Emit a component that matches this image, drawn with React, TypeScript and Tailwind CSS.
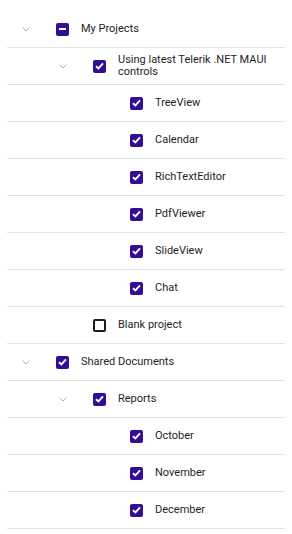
type Node = {
  label: string;
  level: number;
  state: "checked" | "unchecked" | "mixed";
  expandable?: boolean;
};

const items: Node[] = [
  { label: "My Projects", level: 0, state: "mixed", expandable: true },
  { label: "Using latest Telerik .NET MAUI controls", level: 1, state: "checked", expandable: true },
  { label: "TreeView", level: 2, state: "checked" },
  { label: "Calendar", level: 2, state: "checked" },
  { label: "RichTextEditor", level: 2, state: "checked" },
  { label: "PdfViewer", level: 2, state: "checked" },
  { label: "SlideView", level: 2, state: "checked" },
  { label: "Chat", level: 2, state: "checked" },
  { label: "Blank project", level: 1, state: "unchecked" },
  { label: "Shared Documents", level: 0, state: "checked", expandable: true },
  { label: "Reports", level: 1, state: "checked", expandable: true },
  { label: "October", level: 2, state: "checked" },
  { label: "November", level: 2, state: "checked" },
  { label: "December", level: 2, state: "checked" },
];

const indents = ["pl-0", "pl-[37px]", "pl-[74px]"];

function Box({ state }: { state: Node["state"] }) {
  if (state === "unchecked") {
    return <div className="w-[13px] h-[13px] shrink-0 rounded-[2px] border-2 border-[#1c1c1c]" />;
  }
  return (
    <div className="w-[13px] h-[13px] shrink-0 rounded-[2px] bg-[#310e95] flex items-center justify-center">
      {state === "checked" ? (
        <svg width="9" height="8" viewBox="0 0 9 8" fill="none">
          <path d="M1 4.2 L3.4 6.4 L8 1.4" stroke="white" strokeWidth="1.9" />
        </svg>
      ) : (
        <div className="w-[7px] h-[2px] bg-white" />
      )}
    </div>
  );
}

export default function App() {
  return (
    <div className="bg-white w-[292px] min-h-[534px] pt-[11px] px-[7px] font-['Roboto',sans-serif] text-[11px] text-[#1e1e1e]">
      {items.map((n) => (
        <div
          key={n.label}
          className={`flex items-center h-[37px] border-b border-[#e4e4e4] ${indents[n.level]}`}
        >
          <div className="w-[37px] shrink-0 flex justify-center">
            {n.expandable && (
              <svg width="8" height="5" viewBox="0 0 8 5" fill="none">
                <path d="M0.5 0.5 L4 4 L7.5 0.5" stroke="#a8a8a8" strokeWidth="0.9" />
              </svg>
            )}
          </div>
          <div className="ml-3 flex items-center gap-3 pr-3">
            <Box state={n.state} />
            <span className="leading-[12px]">{n.label}</span>
          </div>
        </div>
      ))}
    </div>
  );
}
